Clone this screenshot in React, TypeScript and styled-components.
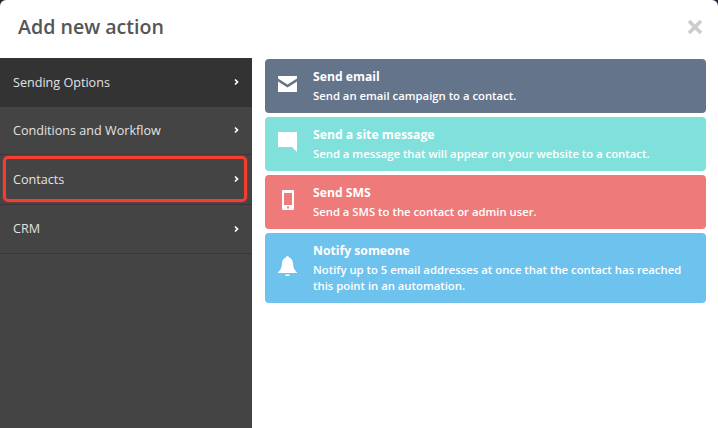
import React from 'react';
import styled, { createGlobalStyle } from 'styled-components';

const GlobalStyle = createGlobalStyle`
  html, body {
    margin: 0;
    padding: 0;
    background: #1d2733;
  }
`

const Modal = styled.div`
  display: flex;
  flex-direction: column;
  width: 718px;
  height: 428px;
  overflow: hidden;
  background: #fff;
  border-radius: 6px 6px 0 0;
  font-family: "Open Sans", "Liberation Sans", sans-serif;
`

const Header = styled.div`
  display: flex;
  justify-content: space-between;
  align-items: center;
  height: 58px;
  padding: 0 15px 5px 18px;
  box-sizing: border-box;
  flex-shrink: 0;
`

const Title = styled.h1`
  margin: 0;
  font-size: 19.6px;
  font-weight: 600;
  color: #555;
`

const Close = styled.span`
  display: flex;
  color: #ccc;
`

const Body = styled.div`
  display: flex;
  flex: 1;
  min-height: 0;
`

const Sidebar = styled.div`
  width: 252px;
  flex-shrink: 0;
  background: #444;
`

const MenuRow = styled.div<{ $active?: boolean; $height: number }>`
  position: relative;
  display: flex;
  justify-content: space-between;
  align-items: center;
  height: ${p => p.$height}px;
  box-sizing: border-box;
  padding: 0 13px ${p => (p.$active ? 0 : 1)}px 13px;
  font-size: 12.6px;
  font-weight: 500;
  color: #e2e2e2;
  background: ${p => (p.$active ? '#333' : '#444')};
  border-bottom: 1px solid ${p => (p.$active ? '#333' : '#383838')};
`

const Highlight = styled.div`
  position: absolute;
  left: 3px;
  right: 5px;
  top: 1px;
  bottom: 2px;
  border: 3px solid #f33d31;
  border-radius: 5px;
  box-shadow: 0 0 2px rgba(243, 61, 49, 0.7);
  box-sizing: border-box;
`

const Actions = styled.div`
  display: flex;
  flex-direction: column;
  gap: 4.5px;
  flex: 1;
  padding: 1px 12px 0 13px;
`

const Card = styled.div<{ $bg: string; $height: number }>`
  display: flex;
  align-items: center;
  height: ${p => p.$height}px;
  flex-shrink: 0;
  box-sizing: border-box;
  background: ${p => p.$bg};
  border-radius: 4px;
  color: #fff;
`

const IconSlot = styled.div`
  display: flex;
  justify-content: center;
  width: 48px;
  padding: 0 3px 4px 0;
  box-sizing: border-box;
  flex-shrink: 0;
`

const CardText = styled.div`
  align-self: flex-start;
  padding: 10px 24px 0 0;
`

const CardTitle = styled.div`
  font-size: 12.2px;
  font-weight: 700;
  line-height: 16px;
`

const CardDesc = styled.div`
  margin-top: 3px;
  font-size: 11.3px;
  font-weight: 600;
  line-height: 16px;
`

const Chevron = () => (
  <svg width="5" height="8" viewBox="0 0 5 8">
    <path d="M1 1.500l2.500 2.500-2.500 2.500" fill="none" stroke="#fff" strokeWidth="1.7" />
  </svg>
)

const MailIcon = () => (
  <svg width="19" height="16" viewBox="0 0 19 16">
    <path d="M0 0h19v2.500L9.500 8.500 0 2.500z M0 5.500l9.500 6 9.500-6V16H0z" fill="#fff" />
  </svg>
)

const MessageIcon = () => (
  <svg width="19" height="20" viewBox="0 0 19 20">
    <path d="M0 0h19v20l-5-5H0z" fill="#fff" />
  </svg>
)

const PhoneIcon = () => (
  <svg width="12" height="20" viewBox="0 0 12 20">
    <path fillRule="evenodd" d="M1 0h10a1 1 0 0 1 1 1v18a1 1 0 0 1-1 1H1a1 1 0 0 1-1-1V1a1 1 0 0 1 1-1z M2 3v12h8V3z M5 16.500h2v2H5z" fill="#fff" />
  </svg>
)

const BellIcon = () => (
  <svg width="19" height="21" viewBox="0 0 19 21">
    <path d="M9.500 0a2 2 0 0 1 1.600 1.400C14 2.200 15 5 15.100 8c.1 3.500 1.100 5.700 3.900 8.500V17H0v-.5C2.800 13.700 3.800 11.500 3.900 8c.1-3 1.100-5.800 4-6.600A2 2 0 0 1 9.500 0z M7 18.500h5C11.500 20.500 7.500 20.500 7 18.500z" fill="#fff" />
  </svg>
)

const menu = [
  { label: 'Sending Options', active: true, height: 49 },
  { label: 'Conditions and Workflow', height: 48 },
  { label: 'Contacts', highlight: true, height: 50 },
  { label: 'CRM', height: 49 },
]

const actions = [
  { title: 'Send email', desc: 'Send an email campaign to a contact.', bg: '#64748b', height: 53.5, icon: <MailIcon /> },
  { title: 'Send a site message', desc: 'Send a message that will appear on your website to a contact.', bg: '#80e1dc', height: 53.5, icon: <MessageIcon /> },
  { title: 'Send SMS', desc: 'Send a SMS to the contact or admin user.', bg: '#ee7a7a', height: 53.5, icon: <PhoneIcon /> },
  { title: 'Notify someone', desc: 'Notify up to 5 email addresses at once that the contact has reached this point in an automation.', bg: '#6dc3ee', height: 70, icon: <BellIcon /> },
]

const App = () => {
  return (
    <Modal>
      <GlobalStyle />
      <Header>
        <Title>Add new action</Title>
        <Close>
          <svg width="16" height="16" viewBox="0 0 16 16">
            <path d="M2 2l12 12M14 2L2 14" stroke="currentColor" strokeWidth="3.600" />
          </svg>
        </Close>
      </Header>
      <Body>
        <Sidebar>
          {menu.map(item => (
            <MenuRow key={item.label} $active={item.active} $height={item.height}>
              {item.label}
              <Chevron />
              {item.highlight && <Highlight />}
            </MenuRow>
          ))}
        </Sidebar>
        <Actions>
          {actions.map(action => (
            <Card key={action.title} $bg={action.bg} $height={action.height}>
              <IconSlot>{action.icon}</IconSlot>
              <CardText>
                <CardTitle>{action.title}</CardTitle>
                <CardDesc>{action.desc}</CardDesc>
              </CardText>
            </Card>
          ))}
        </Actions>
      </Body>
    </Modal>
  )
}

export default App;
